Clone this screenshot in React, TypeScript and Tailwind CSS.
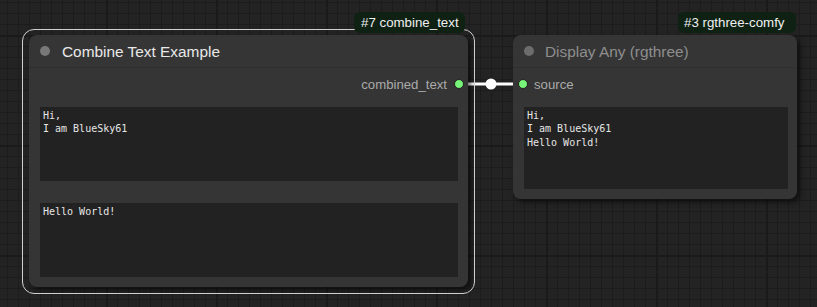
import React from "react";

function Grid() {
  const minors = [];
  for (let i = 1; i < 10; i++) {
    minors.push(<rect key={"v" + i} x={i * 11} y={0} width={1} height={110} fill="#1c1c1c" />);
    minors.push(<rect key={"h" + i} x={0} y={i * 11} width={110} height={1} fill="#1c1c1c" />);
  }
  return (
    <svg className="absolute inset-0" width="817" height="307">
      <defs>
        <pattern id="grid" x="106" y="35" width="110" height="110" patternUnits="userSpaceOnUse">
          <rect x="0" y="0" width="110" height="110" fill="#232323" />
          {minors}
          <rect x="0" y="0" width="2" height="110" fill="#1a1a1a" />
          <rect x="0" y="0" width="110" height="2" fill="#1a1a1a" />
        </pattern>
      </defs>
      <rect x="0" y="0" width="817" height="307" fill="url(#grid)" />
    </svg>
  );
}

function Dot({ className }: { className?: string }) {
  return <div className={"w-[10px] h-[10px] rounded-full bg-[#78f578] border border-[#1e1e1e] " + (className ?? "")} />;
}

const mono = "font-['DejaVu_Sans_Mono',monospace] text-[10px] leading-[13.3px] text-[#e6e6e6] whitespace-pre";
const sans = "font-['Liberation_Sans',Arial,sans-serif]";

export default function App() {
  return (
    <div className={"relative w-[817px] h-[307px] overflow-hidden bg-[#232323] " + sans}>
      <Grid />

      {/* link */}
      <svg className="absolute left-0 top-0" width="817" height="307">
        <line x1="466" y1="84" x2="514" y2="84" stroke="#ffffff" strokeWidth="3" />
        <circle cx="491" cy="84" r="5.5" fill="#ffffff" />
      </svg>

      {/* left node */}
      <div className="absolute left-[29px] top-[35px] w-[439px] h-[252px] rounded-[8px] bg-[#353535] shadow-[3px_3px_5px_rgba(0,0,0,0.55)] flex flex-col">
        <div className="h-[33px] flex items-center pl-[11px] border-b border-[#2f2f2f]">
          <div className="w-[10px] h-[10px] rounded-full bg-[#787878]" />
          <span className="ml-[12px] text-[15.4px] text-[#e8e8e8] pt-[1px]">Combine Text Example</span>
        </div>
        <div className="h-[32px] flex items-center justify-end pr-[4px]">
          <span className="text-[13.2px] text-[#aaaaaa] mr-[7px] pt-[2px]">combined_text</span>
          <Dot />
        </div>
        <div className={"mt-[7px] ml-[11px] w-[418px] h-[74px] bg-[#222222] pl-[3px] pt-[2px] " + mono}>{"Hi,\nI am BlueSky61"}</div>
        <div className={"mt-[22px] ml-[11px] w-[418px] h-[74px] bg-[#222222] pl-[3px] pt-[2px] " + mono}>{"Hello World!"}</div>
      </div>

      {/* selection outline */}
      <div className="absolute left-[22px] top-[29px] w-[453px] h-[265px] rounded-[12px] border-[1.5px] border-[#cfcfcf]" />

      {/* badge left */}
      <div className="absolute left-[354px] top-[12px] w-[111px] h-[21px] rounded-[6px] bg-[#0e2113] flex items-center pl-[7px] text-[13.3px] text-[#f0f0f0]">
        #7 combine_text
      </div>

      {/* right node */}
      <div className="absolute left-[513px] top-[35px] w-[284px] h-[164px] rounded-[8px] bg-[#353535] shadow-[3px_3px_5px_rgba(0,0,0,0.55)] flex flex-col">
        <div className="h-[33px] flex items-center pl-[11px] border-b border-[#2f2f2f]">
          <div className="w-[10px] h-[10px] rounded-full bg-[#6c6c6c]" />
          <span className="ml-[11px] text-[15.4px] text-[#8e8e8e] pt-[1px]">Display Any (rgthree)</span>
        </div>
        <div className="h-[32px] flex items-center pl-[5px]">
          <Dot />
          <span className="text-[13.2px] text-[#aaaaaa] ml-[6px] pt-[2px]">source</span>
        </div>
        <div className={"mt-[7px] ml-[11px] w-[264px] h-[82px] bg-[#222222] pl-[3px] pt-[2px] " + mono}>{"Hi,\nI am BlueSky61\nHello World!"}</div>
      </div>

      {/* badge right */}
      <div className="absolute left-[678px] top-[12px] w-[118px] h-[21px] rounded-[6px] bg-[#0e2113] flex items-center pl-[6px] text-[13.3px] text-[#f0f0f0]">
        #3 rgthree-comfy
      </div>
    </div>
  );
}
